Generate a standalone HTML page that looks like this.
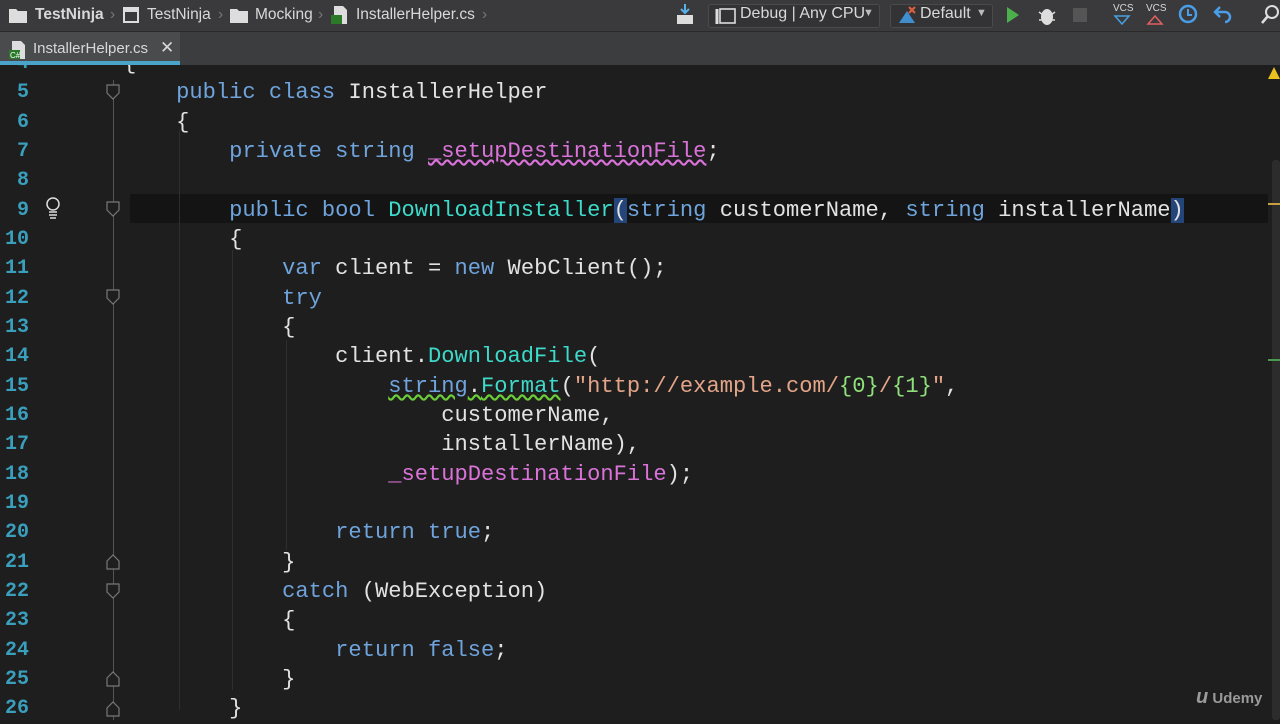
<!DOCTYPE html>
<html><head><meta charset="utf-8"><style>
*{margin:0;padding:0;box-sizing:border-box}
body{width:1280px;height:720px;overflow:hidden;background:#1e1e1e;font-family:"Liberation Sans",sans-serif;position:relative}
#tb{position:absolute;left:0;top:0;width:1280px;height:32px;background:#3a3a3c;border-bottom:1px solid #2a2a2a;color:#d8d8d8;font-size:15.5px}
#tabs{position:absolute;left:0;top:32px;width:1280px;height:33px;background:#3c3d3f}
.tab{position:absolute;left:0;top:0;width:180px;height:33px;background:#4a4b4d;border-bottom:4px solid #4aa3c8;color:#d8d8d8;font-size:15px}
.t{position:absolute;white-space:nowrap}
#code{position:absolute;left:0;top:49px;width:1280px}
.ln{position:absolute;left:0;width:29px;text-align:right;color:#3a9fbd;font-family:"Liberation Mono",monospace;font-size:20px;font-weight:bold;height:29.33px;line-height:29.33px}
.cl{position:absolute;left:70px;font-family:"Liberation Mono",monospace;font-size:22.1px;white-space:pre;color:#e2e2e2;height:29.33px;line-height:29.33px}
.k{color:#6fa3dc}.m{color:#3dd9c9}.f{color:#d973d9}.s{color:#e3a488}.g{color:#8fe07a}
.cur{position:absolute;left:130px;top:194px;width:1138px;height:29px;background:#141414}
.btn{position:absolute;top:4px;height:24px;border:1px solid #4a4a4c;border-radius:3px;background:#333335}
</style></head><body>
<div class="cur"></div>
<div style="position:absolute;left:113px;top:80px;width:1px;height:640px;background:#555"></div>
<div style="position:absolute;left:179px;top:130px;width:1px;height:580px;background:#2e2e2e"></div>
<div style="position:absolute;left:232px;top:250px;width:1px;height:440px;background:#2e2e2e"></div>
<div style="position:absolute;left:286px;top:340px;width:1px;height:210px;background:#2e2e2e"></div>
<div style="position:absolute;left:1272px;top:160px;width:8px;height:560px;background:#2c2c2c;border-radius:3px"></div>
<div style="position:absolute;left:1268px;top:203px;width:12px;height:2px;background:#c9a040"></div>
<div style="position:absolute;left:1268px;top:359px;width:12px;height:2px;background:#4a9a50"></div>
<div id="code">
<div class="ln" style="top:0">4</div><div class="cl" style="top:0">    {</div>
<div class="ln" style="top:29.33px">5</div><div class="cl" style="top:29.33px">        <span class="k">public class</span> InstallerHelper</div>
<div class="ln" style="top:58.67px">6</div><div class="cl" style="top:58.67px">        {</div>
<div class="ln" style="top:88px">7</div><div class="cl" style="top:88px">            <span class="k">private string</span> <span class="f" style="text-decoration:underline wavy #d973d9">_setupDestinationFile</span>;</div>
<div class="ln" style="top:117.33px">8</div>
<div class="ln" style="top:146.67px">9</div><div class="cl" style="top:146.67px">            <span class="k">public bool</span> <span class="m">DownloadInstaller</span><span style="background:#23457a">(</span><span class="k">string</span> customerName, <span class="k">string</span> installerName<span style="background:#23457a">)</span></div>
<div class="ln" style="top:176px">10</div><div class="cl" style="top:176px">            {</div>
<div class="ln" style="top:205.33px">11</div><div class="cl" style="top:205.33px">                <span class="k">var</span> client = <span class="k">new</span> WebClient();</div>
<div class="ln" style="top:234.67px">12</div><div class="cl" style="top:234.67px">                <span class="k">try</span></div>
<div class="ln" style="top:264px">13</div><div class="cl" style="top:264px">                {</div>
<div class="ln" style="top:293.33px">14</div><div class="cl" style="top:293.33px">                    client.<span class="m">DownloadFile</span>(</div>
<div class="ln" style="top:322.67px">15</div><div class="cl" style="top:322.67px">                        <span style="text-decoration:underline wavy #6ccf3a"><span class="k">string</span>.<span class="m">Format</span></span>(<span class="s">"http://example.com/<span class="g">{0}</span>/<span class="g">{1}</span>"</span>,</div>
<div class="ln" style="top:352px">16</div><div class="cl" style="top:352px">                            customerName,</div>
<div class="ln" style="top:381.33px">17</div><div class="cl" style="top:381.33px">                            installerName),</div>
<div class="ln" style="top:410.67px">18</div><div class="cl" style="top:410.67px">                        <span class="f">_setupDestinationFile</span>);</div>
<div class="ln" style="top:440px">19</div>
<div class="ln" style="top:469.33px">20</div><div class="cl" style="top:469.33px">                    <span class="k">return true</span>;</div>
<div class="ln" style="top:498.67px">21</div><div class="cl" style="top:498.67px">                }</div>
<div class="ln" style="top:528px">22</div><div class="cl" style="top:528px">                <span class="k">catch</span> (WebException)</div>
<div class="ln" style="top:557.33px">23</div><div class="cl" style="top:557.33px">                {</div>
<div class="ln" style="top:586.67px">24</div><div class="cl" style="top:586.67px">                    <span class="k">return false</span>;</div>
<div class="ln" style="top:616px">25</div><div class="cl" style="top:616px">                }</div>
<div class="ln" style="top:645.33px">26</div><div class="cl" style="top:645.33px">            }</div>
</div>
<svg style="position:absolute;left:0;top:0" width="130" height="720">
<g fill="#1e1e1e" stroke="#777" stroke-width="1.2">
<path d="M107 85h12v8l-6 6l-6-6z"/><path d="M107 202h12v8l-6 6l-6-6z"/><path d="M107 290h12v8l-6 6l-6-6z"/>
<path d="M107 584h12v8l-6 6l-6-6z"/>
<path d="M107 569v-8l6-6l6 6v8z"/><path d="M107 686v-8l6-6l6 6v8z"/><path d="M107 716v-8l6-6l6 6v8z"/>
</g>
<g stroke="#ddd" fill="none" stroke-width="1.5"><circle cx="53" cy="204" r="6"/><path d="M49 212h8M49 215h8M50 218h6"/></g>
</svg>
<div id="tabs"><div class="tab">
<svg class="t" style="left:9px;top:8px" width="18" height="20"><path d="M3 1h9l4 4v14H3z" fill="#ddd"/><rect x="0" y="10" width="11" height="9" fill="#2a7a2a"/><text x="1" y="18" font-size="8" fill="#fff" font-family="Liberation Sans">C#</text></svg>
<span class="t" style="left:33px;top:8px">InstallerHelper.cs</span><span class="t" style="left:160px;top:6px;font-size:17px">✕</span></div></div>
<div id="tb">
<svg class="t" style="left:9px;top:7px" width="18" height="16"><path d="M0 2h7l2 2h9v12H0z" fill="#ddd"/></svg>
<span class="t" style="left:35px;top:6px;font-weight:bold">TestNinja</span><span class="t" style="left:110px;top:6px;color:#777">›</span>
<svg class="t" style="left:123px;top:7px" width="16" height="16"><rect x="1" y="1" width="14" height="14" fill="none" stroke="#ddd" stroke-width="2"/><rect x="1" y="1" width="14" height="4" fill="#ddd"/></svg>
<span class="t" style="left:147px;top:6px">TestNinja</span><span class="t" style="left:218px;top:6px;color:#777">›</span>
<svg class="t" style="left:230px;top:7px" width="18" height="16"><path d="M0 2h7l2 2h9v12H0z" fill="#ddd"/></svg>
<span class="t" style="left:255px;top:6px">Mocking</span><span class="t" style="left:318px;top:6px;color:#777">›</span>
<svg class="t" style="left:331px;top:5px" width="18" height="20"><path d="M3 1h9l4 4v14H3z" fill="#ddd"/><rect x="0" y="10" width="11" height="9" fill="#2a7a2a"/></svg>
<span class="t" style="left:356px;top:6px">InstallerHelper.cs</span><span class="t" style="left:482px;top:6px;color:#777">›</span>
<svg class="t" style="left:675px;top:3px" width="20" height="22"><path d="M10 1v9M6 6l4 4l4-4" stroke="#5ab0e8" stroke-width="2" fill="none"/><rect x="2" y="12" width="16" height="9" fill="#ddd"/></svg>
<div class="btn" style="left:708px;width:172px"></div>
<svg class="t" style="left:714px;top:8px" width="22" height="17"><rect x="6" y="1" width="15" height="14" fill="none" stroke="#ddd" stroke-width="1.6"/><path d="M3 1v15" stroke="#ddd" stroke-width="3"/></svg>
<span class="t" style="left:740px;top:5px;font-size:16px">Debug | Any CPU</span><span class="t" style="left:863px;top:7px;font-size:11px;color:#bbb">▼</span>
<div class="btn" style="left:890px;width:103px"></div>
<svg class="t" style="left:897px;top:5px" width="20" height="20"><path d="M2 18l8-12l8 12z" fill="#3f8fd0"/><path d="M12 2l6 6M18 2l-6 6" stroke="#e06040" stroke-width="2"/></svg>
<span class="t" style="left:920px;top:5px;font-size:16px">Default</span><span class="t" style="left:976px;top:7px;font-size:11px;color:#bbb">▼</span>
<svg class="t" style="left:1005px;top:6px" width="16" height="18"><path d="M2 1l12 8l-12 8z" fill="#4cb04c"/></svg>
<svg class="t" style="left:1037px;top:4px" width="20" height="22"><ellipse cx="10" cy="13" rx="6" ry="8" fill="#ddd"/><path d="M2 8l4 3M18 8l-4 3M2 16h4M18 16h-4" stroke="#ddd" stroke-width="1.5"/></svg>
<div class="t" style="left:1073px;top:8px;width:14px;height:14px;background:#555"></div>
<span class="t" style="left:1113px;top:3px;font-size:10px">VCS</span><svg class="t" style="left:1113px;top:15px" width="18" height="10"><path d="M2 1h14l-7 8z" fill="none" stroke="#4aa0e0" stroke-width="1.5"/></svg>
<span class="t" style="left:1146px;top:3px;font-size:10px">VCS</span><svg class="t" style="left:1146px;top:15px" width="18" height="10"><path d="M2 9h14l-7-8z" fill="none" stroke="#e06060" stroke-width="1.5"/></svg>
<svg class="t" style="left:1178px;top:4px" width="20" height="20"><circle cx="10" cy="10" r="8" fill="none" stroke="#4a9ee8" stroke-width="2.5"/><path d="M10 5v6h4" stroke="#4a9ee8" stroke-width="2" fill="none"/></svg>
<svg class="t" style="left:1212px;top:4px" width="20" height="20"><path d="M4 8h9a5 5 0 0 1 0 10M8 3l-5 5l5 5" stroke="#4a9ee8" stroke-width="2.5" fill="none"/></svg>
<svg class="t" style="left:1260px;top:4px" width="20" height="22"><circle cx="12" cy="8" r="6" fill="none" stroke="#ddd" stroke-width="2"/><path d="M8 12l-6 7" stroke="#ddd" stroke-width="2.5"/></svg>
</div>
<svg class="t" style="left:1268px;top:66px" width="12" height="14"><path d="M6 1l6 12H0z" fill="#e8c020"/></svg>
<div class="t" style="left:1196px;top:686px;color:#9a9a9a;font-size:15px;font-weight:bold"><span style="font-size:20px;font-style:italic">u</span> Udemy</div>
</body></html>
